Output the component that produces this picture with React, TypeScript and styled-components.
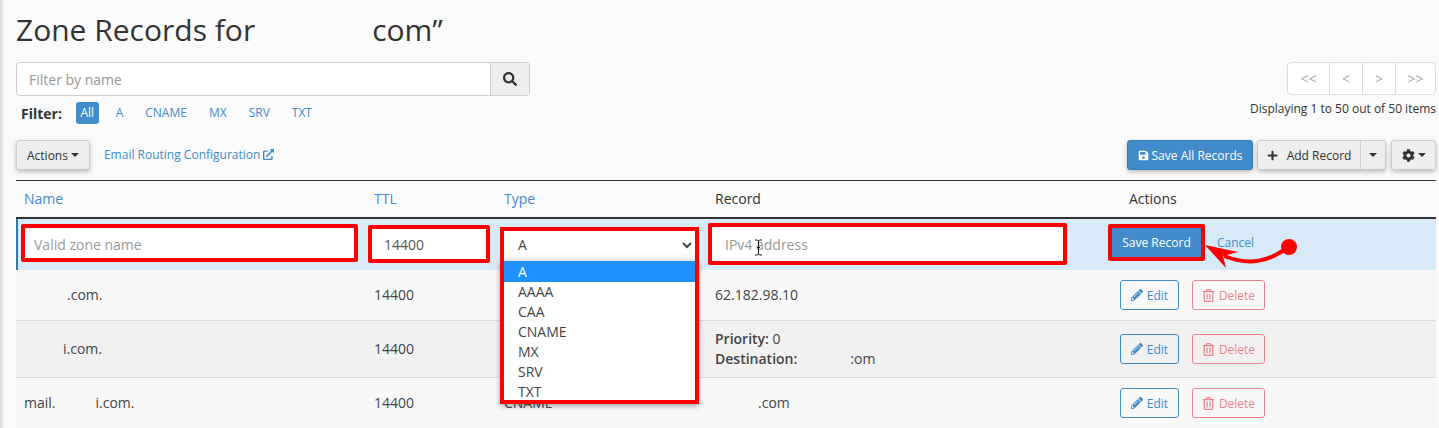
import styled, { createGlobalStyle } from "styled-components";
import {
  FaSearch,
  FaSave,
  FaPlus,
  FaCog,
  FaPencilAlt,
  FaRegTrashAlt,
  FaExternalLinkAlt,
} from "react-icons/fa";

const GlobalStyle = createGlobalStyle`
  html, body {
    margin: 0;
    padding: 0;
    background: #fafafa;
    font-family: "Open Sans", "Liberation Sans", sans-serif;
    color: #333;
    overflow: hidden;
  }
`;

const Page = styled.div`
  height: 428px;
  width: 1439px;
  overflow: hidden;
  box-sizing: border-box;
  padding: 0 3px 0 16px;
  background: #fafafa;
  box-shadow: inset 4px 0 3px -2px #d4d4d4;
`;

const Title = styled.h1`
  margin: 0;
  height: 62px;
  padding-top: 9px;
  box-sizing: border-box;
  font-size: 30px;
  line-height: 41px;
  font-weight: 400;
  color: #333;
  white-space: pre;
`;

const Hidden = styled.span<{ $w: number }>`
  display: inline-block;
  width: ${(p) => p.$w}px;
`;

const TopRow = styled.div`
  display: flex;
  justify-content: space-between;
  height: 78px;
`;

const SearchGroup = styled.div`
  display: flex;
  width: 514px;
  height: 34px;
  box-sizing: border-box;
  border: 1px solid #ccc;
  border-radius: 4px;
  background: #fff;
  overflow: hidden;
`;

const SearchInput = styled.div`
  flex: 1;
  padding-left: 12px;
  font-size: 14px;
  line-height: 34px;
  color: #999;
`;

const SearchButton = styled.div`
  width: 38px;
  display: flex;
  align-items: center;
  justify-content: center;
  background: #eee;
  border-left: 1px solid #ccc;
  color: #333;
  font-size: 14px;
`;

const FilterRow = styled.div`
  display: flex;
  align-items: center;
  height: 22px;
  margin-top: 6px;
  padding-left: 5px;
  font-size: 12px;
  color: #428bca;
`;

const FilterLabel = styled.b`
  font-size: 14px;
  color: #333;
  width: 55px;
`;

const FilterItem = styled.span<{ $active?: boolean }>`
  height: 22px;
  line-height: 22px;
  padding: 0 ${(p) => (p.$active ? 4.5 : 5)}px;
  margin-right: 12px;
  border-radius: 3px;
  background: ${(p) => (p.$active ? "#428bca" : "transparent")};
  color: ${(p) => (p.$active ? "#fff" : "#428bca")};
`;

const RightColumn = styled.div`
  display: flex;
  flex-direction: column;
  align-items: flex-end;
`;

const Pager = styled.div`
  display: flex;
  height: 33px;
  box-sizing: border-box;
  border: 1px solid #ddd;
  border-radius: 4px;
  background: #fff;
`;

const PageCell = styled.span<{ $w: number }>`
  width: ${(p) => p.$w}px;
  box-sizing: border-box;
  line-height: 31px;
  text-align: center;
  font-size: 14px;
  color: #aaa;
  & + & {
    border-left: 1px solid #ddd;
  }
`;

const Displaying = styled.div`
  margin-top: 5px;
  font-size: 12px;
  line-height: 17px;
  color: #333;
`;

const Toolbar = styled.div`
  display: flex;
  justify-content: space-between;
  align-items: flex-start;
  height: 40px;
`;

const ToolGroup = styled.div`
  display: flex;
  align-items: center;
  height: 30px;
`;

const Button = styled.div<{ $primary?: boolean }>`
  height: 30px;
  box-sizing: border-box;
  display: flex;
  align-items: center;
  justify-content: center;
  gap: 3px;
  padding: 0 10px;
  font-size: 12px;
  border-radius: 3px;
  border: 1px solid ${(p) => (p.$primary ? "#357ebd" : "#ccc")};
  background: ${(p) => (p.$primary ? "#428bca" : "#eee")};
  color: ${(p) => (p.$primary ? "#fff" : "#333")};
  box-shadow: 0 2px 4px rgba(0, 0, 0, 0.25);
`;

const SaveAllButton = styled(Button)`
  width: 126px;
  padding: 0;
`;

const Caret = styled.i`
  display: inline-block;
  width: 0;
  height: 0;
  border-top: 4px solid #333;
  border-left: 4px solid transparent;
  border-right: 4px solid transparent;
`;

const Split = styled(Button)`
  padding: 0;
  margin-left: 4px;
  gap: 0;
`;

const SplitMain = styled.span`
  width: 102px;
  display: flex;
  align-items: center;
  justify-content: center;
  gap: 9px;
  height: 100%;
`;

const SplitCaret = styled.span`
  width: 24px;
  height: 100%;
  display: flex;
  align-items: center;
  justify-content: center;
  border-left: 1px solid #ccc;
`;

const GearButton = styled(Button)`
  width: 45px;
  margin-left: 5px;
  padding: 0;
  gap: 3px;
`;

const RoutingLink = styled.a`
  margin-left: 14px;
  font-size: 12px;
  color: #428bca;
  display: inline-flex;
  align-items: center;
  gap: 3px;
  position: relative;
  top: -1px;
`;

const Table = styled.div`
  border-top: 1px solid #333;
`;

const Columns = styled.div`
  display: grid;
  grid-template-columns: 350px 130px 211px 405px 324px;
`;

const HeadRow = styled(Columns)`
  height: 38px;
  box-sizing: border-box;
  padding-bottom: 2px;
  border-bottom: 2px solid #333;
  align-items: center;
  font-size: 14px;
`;

const HeadCell = styled.div<{ $sort?: boolean; $pad?: number }>`
  padding-left: ${(p) => p.$pad ?? 8}px;
  color: ${(p) => (p.$sort ? "#428bca" : "#333")};
`;

const EditRow = styled(Columns)`
  position: relative;
  height: 51px;
  background: #d6eaf8;
  border-left: 2px solid #2f78b0;
  grid-template-columns: 348px 130px 211px 405px 324px;
  box-sizing: border-box;
`;

const EditCell = styled.div<{ $left: number; $top: number }>`
  padding-left: ${(p) => p.$left}px;
  padding-top: ${(p) => p.$top}px;
  position: relative;
`;

const RedInput = styled.div<{ $w: number; $h: number; $pad: number; $lh: number; $muted?: boolean }>`
  width: ${(p) => p.$w}px;
  height: ${(p) => p.$h}px;
  box-sizing: border-box;
  border: 4px solid #fe0000;
  border-radius: 2px;
  background: #fff;
  padding-left: ${(p) => p.$pad}px;
  font-size: 14px;
  line-height: ${(p) => p.$lh}px;
  color: ${(p) => (p.$muted ? "#999" : "#555")};
`;

const SelectBox = styled.div`
  width: 199px;
  height: 34px;
  box-sizing: border-box;
  border: 4px solid #fe0000;
  border-bottom: 0;
  background: linear-gradient(#fff 70%, #f0f0f0);
  padding-left: 14px;
  font-size: 14px;
  line-height: 28px;
  color: #444;
  display: flex;
  justify-content: space-between;
  align-items: flex-start;
`;

const Chevron = styled.svg`
  width: 10px;
  height: 7px;
  margin: 11px 3px 0 0;
`;

const Dropdown = styled.div`
  position: absolute;
  z-index: 3;
  left: 4px;
  top: 42px;
  width: 199px;
  box-sizing: border-box;
  border: 4px solid #fe0000;
  border-top: 0;
  background: #fff;
  box-shadow: 0 2px 5px rgba(0, 0, 0, 0.35);
  height: 143px;
  overflow: hidden;
`;

const DropOption = styled.div<{ $selected?: boolean }>`
  height: 20px;
  line-height: 20px;
  padding-left: 14px;
  font-size: 14px;
  background: ${(p) => (p.$selected ? "#1e90ff" : "transparent")};
  color: ${(p) => (p.$selected ? "#fff" : "#444")};
  &:first-child {
    height: 21px;
    line-height: 22px;
  }
`;

const TextCursor = styled.svg`
  position: absolute;
  left: 47px;
  top: 20px;
  width: 9px;
  height: 17px;
`;

const SaveRecord = styled.div`
  display: flex;
  align-items: center;
  justify-content: center;
  width: 97px;
  height: 37px;
  box-sizing: border-box;
  border: 4px solid #fe0000;
  border-radius: 2px;
  background: #428bca;
  color: #fff;
  font-size: 12px;
  font-weight: 500;
`;

const EditActions = styled.div`
  display: flex;
  align-items: center;
  gap: 12px;
  margin-left: -4px;
`;

const CancelLink = styled.a`
  font-size: 12px;
  color: #428bca;
`;

const Annotation = styled.svg`
  position: absolute;
  left: 90px;
  top: 6px;
  width: 100px;
  height: 50px;
  overflow: visible;
`;

const Row = styled(Columns)<{ $h: number; $alt?: boolean }>`
  height: ${(p) => p.$h}px;
  align-items: center;
  font-size: 14px;
  color: #444;
  box-sizing: border-box;
  border-bottom: 1px solid #ddd;
  background: ${(p) => (p.$alt ? "#f1f1f1" : "#f8f8f8")};
`;

const Cell = styled.div<{ $pad?: number }>`
  padding-left: ${(p) => p.$pad ?? 8}px;
  white-space: nowrap;
  line-height: 20px;
  b {
    font-weight: 600;
  }
`;

const RowActions = styled.div`
  padding-left: 8px;
  display: flex;
  gap: 13px;
`;

const OutlineButton = styled.div<{ $danger?: boolean }>`
  height: 30px;
  box-sizing: border-box;
  display: flex;
  align-items: center;
  justify-content: center;
  gap: 4px;
  width: ${(p) => (p.$danger ? 73 : 59)}px;
  font-size: 12px;
  border-radius: 3px;
  border: 1px solid ${(p) => (p.$danger ? "#e8838f" : "#428bca")};
  color: ${(p) => (p.$danger ? "#e8838f" : "#428bca")};
`;

const actions = (
  <RowActions>
    <OutlineButton>
      <FaPencilAlt size={12} /> Edit
    </OutlineButton>
    <OutlineButton $danger>
      <FaRegTrashAlt size={13} /> Delete
    </OutlineButton>
  </RowActions>
);

const App = () => {
  return (
    <Page>
      <GlobalStyle />
      <Title>
        Zone Records for<Hidden $w={117} />
        com”
      </Title>

      <TopRow>
        <div>
          <SearchGroup>
            <SearchInput>Filter by name</SearchInput>
            <SearchButton>
              <FaSearch />
            </SearchButton>
          </SearchGroup>
          <FilterRow>
            <FilterLabel>Filter:</FilterLabel>
            <FilterItem $active>All</FilterItem>
            <FilterItem>A</FilterItem>
            <FilterItem>CNAME</FilterItem>
            <FilterItem>MX</FilterItem>
            <FilterItem>SRV</FilterItem>
            <FilterItem>TXT</FilterItem>
          </FilterRow>
        </div>
        <RightColumn>
          <Pager>
            <PageCell $w={41}>&lt;&lt;</PageCell>
            <PageCell $w={33}>&lt;</PageCell>
            <PageCell $w={33}>&gt;</PageCell>
            <PageCell $w={40}>&gt;&gt;</PageCell>
          </Pager>
          <Displaying>Displaying 1 to 50 out of 50 items</Displaying>
        </RightColumn>
      </TopRow>

      <Toolbar>
        <ToolGroup>
          <Button>
            Actions <Caret />
          </Button>
          <RoutingLink>
            Email Routing Configuration <FaExternalLinkAlt size={11} />
          </RoutingLink>
        </ToolGroup>
        <ToolGroup>
          <SaveAllButton $primary>
            <FaSave size={11} /> Save All Records
          </SaveAllButton>
          <Split>
            <SplitMain>
              <FaPlus size={11} /> Add Record
            </SplitMain>
            <SplitCaret>
              <Caret />
            </SplitCaret>
          </Split>
          <GearButton>
            <FaCog size={13} /> <Caret />
          </GearButton>
        </ToolGroup>
      </Toolbar>

      <Table>
        <HeadRow>
          <HeadCell $sort>Name</HeadCell>
          <HeadCell $sort>TTL</HeadCell>
          <HeadCell $sort>Type</HeadCell>
          <HeadCell>Record</HeadCell>
          <HeadCell $pad={17}>Actions</HeadCell>
        </HeadRow>

        <EditRow>
          <EditCell $left={3} $top={5}>
            <RedInput $w={337} $h={38} $lh={34} $pad={9} $muted>
              Valid zone name
            </RedInput>
          </EditCell>
          <EditCell $left={2} $top={6}>
            <RedInput $w={122} $h={38} $lh={32} $pad={12}>
              14400
            </RedInput>
          </EditCell>
          <EditCell $left={4} $top={8}>
            <SelectBox>
              A
              <Chevron viewBox="0 0 10 7">
                <path d="M1 1l4 4 4-4" fill="none" stroke="#444" strokeWidth="2" />
              </Chevron>
            </SelectBox>
            <Dropdown>
              <DropOption $selected>A</DropOption>
              <DropOption>AAAA</DropOption>
              <DropOption>CAA</DropOption>
              <DropOption>CNAME</DropOption>
              <DropOption>MX</DropOption>
              <DropOption>SRV</DropOption>
              <DropOption>TXT</DropOption>
            </Dropdown>
          </EditCell>
          <EditCell $left={1} $top={4}>
            <RedInput $w={359} $h={42} $lh={36} $pad={13} $muted>
              IPv4 address
            </RedInput>
            <TextCursor viewBox="0 0 9 17">
              <path d="M1 1h2.5l1 1 1-1H8M4.5 2v13M1 16h2.5l1-1 1 1H8M3 8.5h3" fill="none" stroke="#111" strokeWidth="1" />
            </TextCursor>
          </EditCell>
          <EditCell $left={0} $top={5}>
            <EditActions>
              <SaveRecord>Save Record</SaveRecord>
              <CancelLink>Cancel</CancelLink>
            </EditActions>
            <Annotation viewBox="0 0 100 50">
              <circle cx="87" cy="22" r="8" fill="#fe0000" />
              <path d="M82 25C66 36 48 41 22 31" fill="none" stroke="#fe0000" strokeWidth="4" />
              <path d="M3 20L24 43L21 31L36 27Z" fill="#fe0000" />
            </Annotation>
          </EditCell>
        </EditRow>

        <Row $h={51}>
          <Cell $pad={51}>.com.</Cell>
          <Cell>14400</Cell>
          <Cell />
          <Cell>62.182.98.10</Cell>
          {actions}
        </Row>
        <Row $h={57} $alt>
          <Cell $pad={47}>i.com.</Cell>
          <Cell>14400</Cell>
          <Cell />
          <Cell>
            <b>Priority:</b> 0
            <br />
            <b>Destination:</b>
            <Hidden $w={53} />
            :om
          </Cell>
          {actions}
        </Row>
        <Row $h={51}>
          <Cell>
            mail.
            <Hidden $w={40} />
            i.com.
          </Cell>
          <Cell>14400</Cell>
          <Cell>CNAME</Cell>
          <Cell>
            <Hidden $w={43} />
            .com
          </Cell>
          {actions}
        </Row>
      </Table>
    </Page>
  );
};

export default App;
